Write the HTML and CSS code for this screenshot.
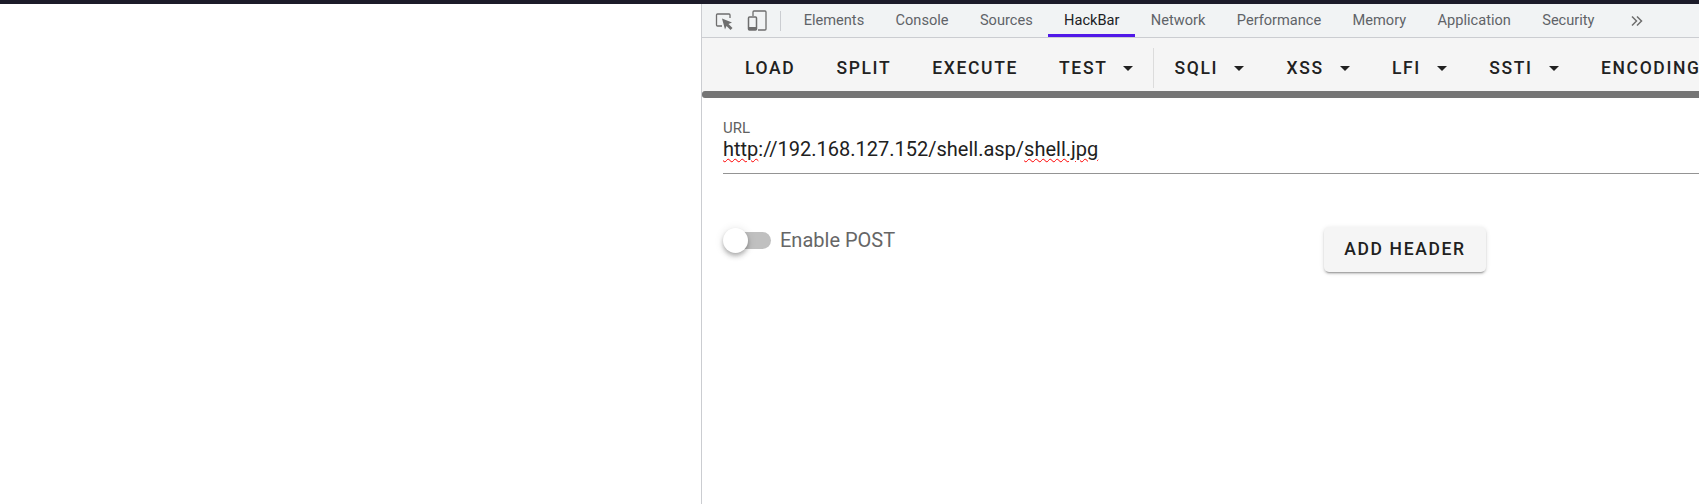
FILE: index.html
```html
<!DOCTYPE html>
<html lang="en">
<head>
  <meta charset="UTF-8">
  <meta name="viewport" content="width=device-width, initial-scale=1.0">
  <title>HackBar</title>
  <link rel="stylesheet" href="styles.css">
</head>
<body>
  <div class="topbar"></div>

  <div class="window">
    <div class="page"></div>

    <div class="devtools">
      <nav class="tabs">
        <div class="tab-icons">
          <svg class="tab-icon" width="20" height="20" viewBox="0 0 20 20">
            <path d="M8 15H3.500A1 1 0 0 1 2.500 14V4A1 1 0 0 1 3.500 3H15A1 1 0 0 1 16 4V7" fill="none" stroke="#6e6e6e" stroke-width="1.300"/>
            <path d="M8 7.500L18 11.500L14.500 13L18.500 17L16.500 19L12.500 15L11 18.500Z" fill="#6e6e6e"/>
          </svg>
          <svg class="tab-icon" width="20" height="22" viewBox="0 0 20 22">
            <path d="M6 6V2A1 1 0 0 1 7 1H18A1 1 0 0 1 19 2V19A1 1 0 0 1 18 20H11" fill="none" stroke="#6e6e6e" stroke-width="1.300"/>
            <rect x="1.500" y="7" width="8" height="13" rx="1" fill="none" stroke="#6e6e6e" stroke-width="1.500"/>
            <rect x="1.500" y="17" width="8" height="3" fill="#6e6e6e"/>
          </svg>
        </div>
        <span class="tab-sep"></span>
        <a class="tab">Elements</a>
        <a class="tab">Console</a>
        <a class="tab">Sources</a>
        <a class="tab active">HackBar</a>
        <a class="tab">Network</a>
        <a class="tab">Performance</a>
        <a class="tab">Memory</a>
        <a class="tab">Application</a>
        <a class="tab">Security</a>
        <svg class="more" width="12" height="12" viewBox="0 0 12 12">
          <path d="M1 1.500L5.500 6L1 10.500M6 1.500L10.500 6L6 10.500" fill="none" stroke="#6e6e6e" stroke-width="1.500"/>
        </svg>
      </nav>

      <div class="toolbar">
        <button class="btn">LOAD</button>
        <button class="btn">SPLIT</button>
        <button class="btn">EXECUTE</button>
        <button class="btn">TEST<i class="caret"></i></button>
        <span class="toolbar-sep"></span>
        <button class="btn menu">SQLI<i class="caret"></i></button>
        <button class="btn menu">XSS<i class="caret"></i></button>
        <button class="btn menu">LFI<i class="caret"></i></button>
        <button class="btn menu">SSTI<i class="caret"></i></button>
        <button class="btn menu">ENCODING<i class="caret"></i></button>
      </div>
      <div class="scrollbar"></div>

      <main class="content">
        <div class="field">
          <label class="field-label">URL</label>
          <div class="field-value"><span class="misspelled">http</span>://192.168.127.152/shell.asp/<span class="misspelled">shell.jpg</span></div>
        </div>

        <div class="options">
          <div class="switch-row">
            <span class="switch"><span class="switch-thumb"></span></span>
            <span class="switch-label">Enable POST</span>
          </div>
          <button class="btn raised">ADD HEADER</button>
        </div>
      </main>
    </div>
  </div>
</body>
</html>
```

FILE: styles.css
```css
* {
  margin: 0;
  padding: 0;
  box-sizing: border-box;
}

html,
body {
  height: 100%;
  overflow: hidden;
}

body {
  font-family: Roboto, "Liberation Sans", sans-serif;
  background: #ffffff;
  display: flex;
  flex-direction: column;
}

.topbar {
  height: 4px;
  background: #1c1b29;
  flex: none;
}

.window {
  flex: 1;
  display: flex;
  min-height: 0;
}

.page {
  width: 701px;
  flex: none;
  background: #ffffff;
}

.devtools {
  flex: 1;
  min-width: 0;
  border-left: 1px solid #cbcdd1;
  overflow: hidden;
}

.tabs {
  height: 34px;
  display: flex;
  align-items: center;
  background: #f1f3f4;
  border-bottom: 1px solid #cbcdd1;
}

.tab-icons {
  display: flex;
  align-items: center;
  gap: 13px;
  padding-left: 12px;
}

.tab-sep {
  width: 1px;
  height: 20px;
  margin: 0 7px 0 13px;
  background: #cbcdd1;
}

.tab {
  height: 33px;
  padding: 0 15.700px 1px;
  display: flex;
  align-items: center;
  font-size: 14.600px;
  color: #5f6368;
}

.tab.active {
  color: #202124;
  border-bottom: 3px solid #5018e8;
  padding-top: 2px;
  padding-bottom: 0;
}

.more {
  margin-left: 21px;
}

.toolbar {
  height: 53px;
  padding: 7px 0 0 23px;
  display: flex;
  align-items: center;
  background: #f5f5f5;
  overflow: hidden;
  white-space: nowrap;
}

.toolbar .btn {
  margin-right: 1px;
}

.toolbar .btn.menu {
  margin-right: 2.300px;
}

.toolbar-sep {
  width: 1px;
  height: 40px;
  flex: none;
  margin: 0 0 0 -1px;
  background: #dcdcdc;
}

.btn {
  flex: none;
  height: 45px;
  padding: 0 20px;
  display: inline-flex;
  align-items: center;
  border: none;
  background: none;
  font-family: inherit;
  font-size: 17.500px;
  font-weight: 500;
  letter-spacing: 1.650px;
  color: #212121;
}

.caret {
  width: 0;
  height: 0;
  margin-left: 16px;
  border-left: 5px solid transparent;
  border-right: 5px solid transparent;
  border-top: 5px solid #212121;
}

.scrollbar {
  height: 7px;
  background: #757575;
  border-radius: 3px 0 0 3px;
}

.content {
  padding: 21px 0 0 21px;
}

.field {
  height: 55px;
  border-bottom: 1px solid #949494;
}

.field-label {
  display: block;
  font-size: 15px;
  line-height: 18px;
  color: #616161;
}

.field-value {
  font-size: 20px;
  line-height: 25px;
  color: #212121;
  white-space: nowrap;
}

.misspelled {
  text-decoration: underline wavy #ff0000 1px;
  text-underline-offset: 2px;
}

.options {
  margin-top: 53px;
  display: grid;
  grid-template-columns: 601px auto;
  align-items: start;
  justify-content: start;
}

.switch-row {
  display: flex;
  align-items: center;
  gap: 9px;
  margin-top: 1px;
}

.switch {
  width: 46px;
  height: 17px;
  margin-left: 2px;
  display: flex;
  align-items: center;
  flex: none;
  background: #c0c0c0;
  border-radius: 9px;
}

.switch-thumb {
  width: 25px;
  height: 25px;
  flex: none;
  margin-left: -2px;
  border-radius: 50%;
  background: #ffffff;
  box-shadow: 0 2px 4px -1px rgba(0, 0, 0, 0.2), 0 4px 5px 0 rgba(0, 0, 0, 0.14), 0 1px 10px 0 rgba(0, 0, 0, 0.12);
}

.switch-label {
  font-size: 20px;
  color: #666666;
}

.btn.raised {
  width: 162px;
  padding: 0 0 1px;
  justify-content: center;
  background: #f5f5f5;
  border-radius: 5px;
  box-shadow: 0 3px 1px -2px rgba(0, 0, 0, 0.2), 0 2px 2px 0 rgba(0, 0, 0, 0.14), 0 1px 5px 0 rgba(0, 0, 0, 0.12);
}
```
